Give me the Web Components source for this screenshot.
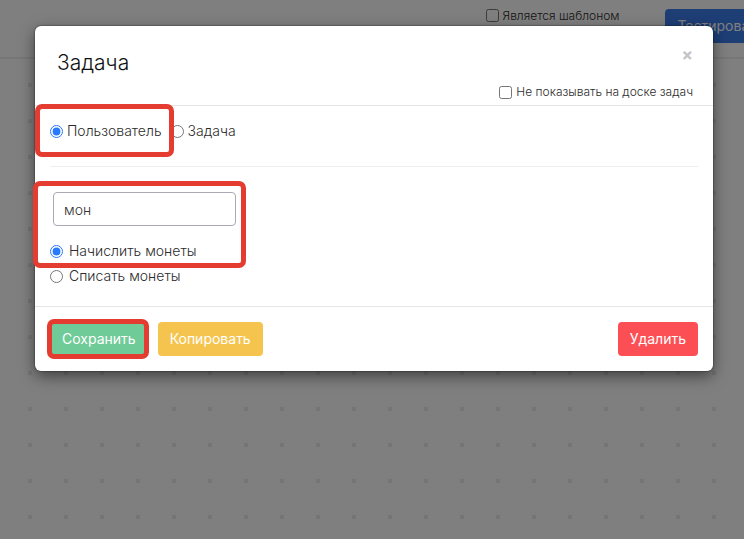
<!DOCTYPE html>
<html lang="ru">
<head>
<meta charset="utf-8">
<meta name="viewport" content="width=device-width, initial-scale=1">
<title>Задача</title>
<style>
html, body { height: 100%; margin: 0; }
body { font: 300 14px/20px Inter, "Open Sans", sans-serif; color: #2c2c2c; overflow: hidden; }
</style>
</head>
<body>
<task-page></task-page>
<script>
function define(name, html, setup) {
  const template = document.createElement('template');
  template.innerHTML = '<style>*{box-sizing:border-box}</style>' + html;
  customElements.define(name, class extends HTMLElement {
    constructor() {
      super();
      this.attachShadow({ mode: 'open' }).append(template.content.cloneNode(true));
    }
    connectedCallback() { if (setup) setup(this, this.shadowRoot); }
  });
}

// Checkbox or radio with its label; radios of one group share a host attribute.
define('choice-field', `
<style>
:host { display: inline-block; }
label { display: flex; align-items: center; gap: var(--choice-gap, 4px); white-space: nowrap; }
input { width: 13px; height: 13px; margin: 0; flex: none; accent-color: #2979ff; }
</style>
<label><input><span><slot></slot></span></label>`, (host, root) => {
  const input = root.querySelector('input');
  input.type = host.getAttribute('type');
  input.checked = host.hasAttribute('checked');
  input.addEventListener('change', () => {
    const group = host.getAttribute('group');
    if (!group) return;
    host.getRootNode().querySelectorAll('choice-field[group="' + group + '"]').forEach(other => {
      if (other !== host) other.shadowRoot.querySelector('input').checked = false;
    });
  });
});

define('action-button', `
<style>
:host { display: inline-block; }
button { height: 34px; padding: 0 12px; border: 0; border-radius: 4px; background: var(--fill);
  color: #fff; font: 400 14px/20px Inter, "Open Sans", sans-serif; white-space: nowrap; }
</style>
<button type="button"><slot></slot></button>`);

// Red highlight frame laid over a part of the dialog.
define('highlight-frame', `
<style>
:host { position: absolute; border: 5px solid #e53c31; border-radius: 7px; pointer-events: none; }
</style>`);

define('page-header', `
<style>
:host { display: flex; box-sizing: border-box; justify-content: flex-end; height: 59px; padding-top: 9px; background: #fff;
  border-bottom: 2px solid #efefef; overflow: hidden; }
choice-field { font-size: 12px; line-height: 12px; margin-right: 46px; }
.run { margin-right: -42px; --fill: #3c7cec; }
</style>
<choice-field type="checkbox">Является шаблоном</choice-field>
<action-button class="run">Тестирование</action-button>`);

define('dialog-window', `
<style>
:host { display: block; position: relative; background: #fff; border-radius: 6px;
  box-shadow: 0 5px 15px rgba(0,0,0,.5), 0 0 1px 1px rgba(0,0,0,.2); }
header { display: flex; flex-wrap: wrap; justify-content: space-between; padding: 21px 20px 3px 22px;
  border-bottom: 1px solid #e5e5e5; }
h2 { margin: 0; font-size: 21px; font-weight: 300; line-height: 32px; color: #111; }
.close { height: 16px; padding: 0; border: 0; background: none; color: #c4c4c4;
  font: 700 17px/16px Inter, sans-serif; }
.hide { width: 100%; display: flex; justify-content: flex-end; font-size: 12px; padding-top: 3px; }
main { padding: 15px 15px 20px; }
.kind { display: flex; gap: 9px; }
hr { margin: 25px 0; border: 0; border-top: 1px solid #eee; }
.search { display: block; width: 183px; height: 34px; margin: 0 3px 15px; padding: 0 10px;
  border: 1px solid #aaa9b5; border-radius: 4px; background: #fff; color: #333;
  font: 300 14px/20px Inter, "Open Sans", sans-serif; outline: 0; }
.operation { display: flex; flex-direction: column; gap: 5px; align-items: flex-start; --choice-gap: 6px; }
footer { display: flex; gap: 10px; padding: 15px; border-top: 1px solid #e5e5e5; }
.delete { margin-left: auto; --fill: #fb4f55; }
.save { --fill: #6fcb97; }
.copy { --fill: #f5c44e; }
.mark-kind { left: 0; top: 78px; width: 139px; height: 53px; }
.mark-coins { left: -2px; top: 155px; width: 213px; height: 87px; }
.save-wrap { position: relative; display: flex; }
.mark-save { inset: -3px -1px -3px -3px; }
</style>
<header>
  <h2>Задача</h2>
  <button class="close" type="button" aria-label="Закрыть">×</button>
  <div class="hide"><choice-field type="checkbox">Не показывать на доске задач</choice-field></div>
</header>
<main>
  <div class="kind">
    <choice-field type="radio" group="kind" checked>Пользователь</choice-field>
    <choice-field type="radio" group="kind">Задача</choice-field>
  </div>
  <hr>
  <input class="search" type="text" value="мон" aria-label="Поиск действия">
  <div class="operation">
    <choice-field type="radio" group="operation" checked>Начислить монеты</choice-field>
    <choice-field type="radio" group="operation">Списать монеты</choice-field>
  </div>
</main>
<footer>
  <div class="save-wrap"><action-button class="save">Сохранить</action-button><highlight-frame class="mark-save"></highlight-frame></div>
  <action-button class="copy">Копировать</action-button>
  <action-button class="delete">Удалить</action-button>
</footer>
<highlight-frame class="mark-kind"></highlight-frame>
<highlight-frame class="mark-coins"></highlight-frame>`);

define('task-page', `
<style>
:host { display: flex; flex-direction: column; height: 100%; position: relative; }
.canvas { flex: 1;
  background: conic-gradient(from 270deg at 4px 4px, #eaeaea 90deg, #fff 0) 28px 24px / 36px 36px; }
.backdrop { position: absolute; inset: 0; padding: 26px 31px 0 35px; background: rgba(0,0,0,.5); }
</style>
<page-header></page-header>
<div class="canvas"></div>
<div class="backdrop"><dialog-window></dialog-window></div>`);
</script>
</body>
</html>
